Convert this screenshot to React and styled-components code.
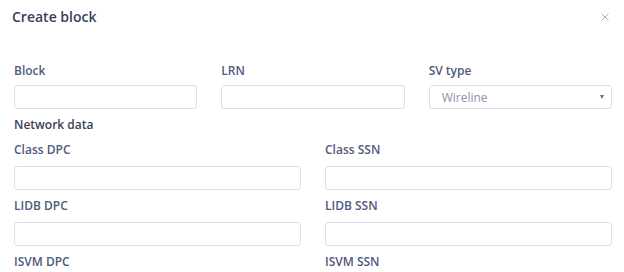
import React from 'react';
import styled, { createGlobalStyle } from 'styled-components';

const GlobalStyle = createGlobalStyle`
  html, body {
    margin: 0;
    padding: 0;
    background: #fff;
    font-family: "Open Sans", "Liberation Sans", sans-serif;
  }
`;

const Modal = styled.div`
  width: 624px;
  height: 272px;
  overflow: hidden;
  padding: 0 12px 0 14px;
  box-sizing: border-box;
`;

const Header = styled.div`
  display: flex;
  justify-content: space-between;
  align-items: center;
  height: 33px;
  margin-left: -2px;
`;

const Title = styled.h2`
  margin: 0;
  font-size: 14px;
  font-weight: 600;
  color: #3b3d5c;
`;

const Close = styled.button`
  border: none;
  background: transparent;
  padding: 0;
  margin-right: 2px;
  width: 10px;
  height: 10px;
  display: flex;
  align-items: center;
  justify-content: center;
  cursor: pointer;
`;

const Row = styled.div`
  display: grid;
  grid-template-columns: ${p => `repeat(${p.cols}, 1fr)`};
  column-gap: 24px;
  margin-top: ${p => p.top || 0}px;
`;

const Field = styled.div`
  display: flex;
  flex-direction: column;
  gap: ${p => p.gap}px;
`;

const Label = styled.label`
  font-size: 12px;
  line-height: 16px;
  font-weight: 600;
  color: #4f5a7c;
`;

const Section = styled.div`
  font-size: 12px;
  line-height: 16px;
  font-weight: 600;
  color: #3d4058;
  margin-top: 8px;
`;

const Input = styled.input`
  box-sizing: border-box;
  height: 24px;
  border: 1px solid #dcdfe6;
  border-radius: 3px;
  outline: none;
  padding: 0 12px;
  font-family: inherit;
  font-size: 12px;
`;

const SelectBox = styled.div`
  box-sizing: border-box;
  height: 24px;
  border: 1px solid #dcdfe6;
  border-radius: 3px;
  display: flex;
  align-items: center;
  justify-content: space-between;
  padding: 0 12px;
  font-size: 12px;
  color: #8b93a9;
`;

const Caret = styled.span`
  width: 0;
  height: 0;
  border-left: 2.5px solid transparent;
  border-right: 2.5px solid transparent;
  border-top: 4px solid #6b6f7a;
  margin-right: -5px;
`;

const Group = ({ label, gap = 8, children }) => (
  <Field gap={gap}>
    <Label>{label}</Label>
    {children}
  </Field>
);

export default function App() {
  return (
    <>
      <GlobalStyle />
      <Modal>
        <Header>
          <Title>Create block</Title>
          <Close aria-label="close">
            <svg width="8" height="8" viewBox="0 0 8 8">
              <path d="M0.5 0.5L7.5 7.5M7.5 0.5L0.5 7.5" stroke="#a9acb4" strokeWidth="1" />
            </svg>
          </Close>
        </Header>
        <Row cols={3} top={30}>
          <Group label="Block" gap={6}><Input /></Group>
          <Group label="LRN" gap={6}><Input /></Group>
          <Group label="SV type" gap={6}>
            <SelectBox>Wireline<Caret /></SelectBox>
          </Group>
        </Row>
        <Section>Network data</Section>
        <Row cols={2} top={9}>
          <Group label="Class DPC"><Input /></Group>
          <Group label="Class SSN"><Input /></Group>
        </Row>
        <Row cols={2} top={8}>
          <Group label="LIDB DPC"><Input /></Group>
          <Group label="LIDB SSN"><Input /></Group>
        </Row>
        <Row cols={2} top={8}>
          <Group label="ISVM DPC"><Input /></Group>
          <Group label="ISVM SSN"><Input /></Group>
        </Row>
      </Modal>
    </>
  );
}
